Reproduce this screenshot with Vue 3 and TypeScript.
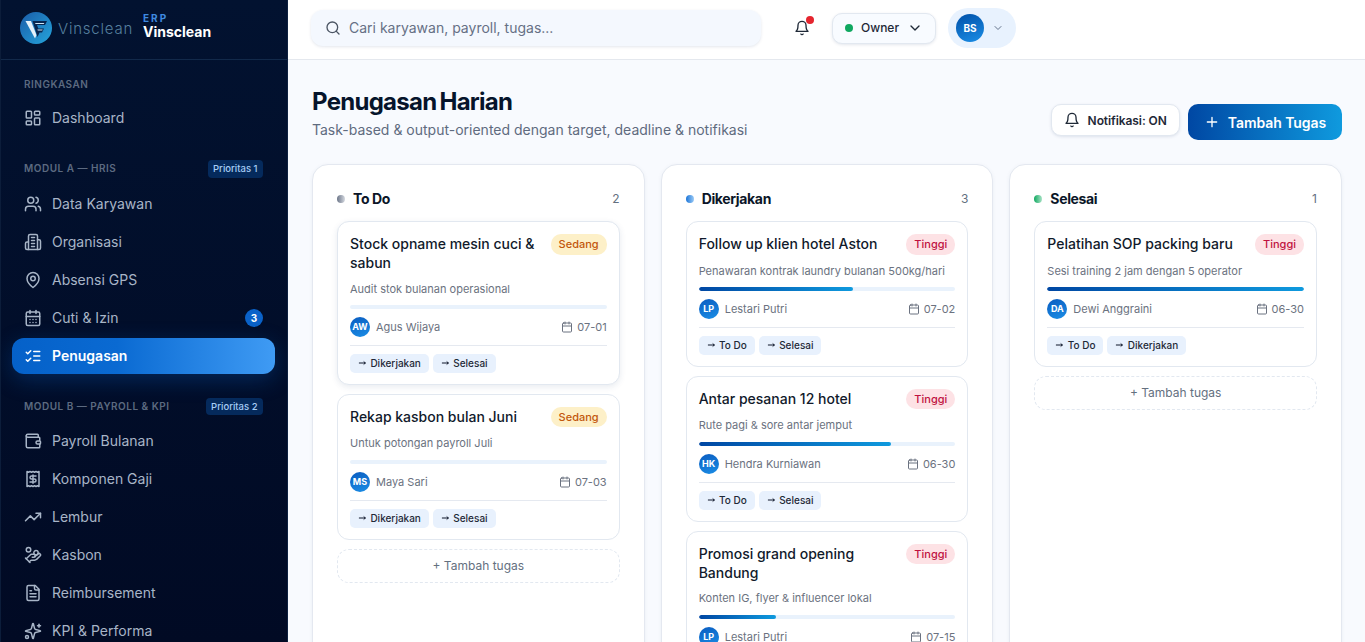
<template>
  <div class="app">
    <aside class="sidebar">
      <div class="brand">
        <svg class="logo" viewBox="0 0 32 32" width="32" height="32">
          <defs>
            <linearGradient id="logoFill" x1="0" y1="0" x2="1" y2="1">
              <stop offset="0" stop-color="#1a5ca8" />
              <stop offset="1" stop-color="#25a5dc" />
            </linearGradient>
          </defs>
          <circle cx="16" cy="16" r="16" fill="url(#logoFill)" />
          <path d="M5.5 9h5.5l5.5 14-1.5 3.5z" fill="#e4f1fa" />
          <path d="M12.5 9H27l-2 4h-8l1.3 3.5H24l-2 4h-2.4L17.5 25z" fill="#08264f" />
          <path d="M15 11h9.4l-.6 1H15.6zM17.4 17.5h5.3l-.5 1h-4.4z" fill="#cfe6f5" />
        </svg>
        <span class="logoWord">Vinsclean</span>
        <div class="brandText">
          <span class="erp">ERP</span>
          <strong class="brandName">Vinsclean</strong>
        </div>
      </div>
      <nav class="nav">
        <section v-for="group in navGroups" :key="group.label" class="navGroup">
          <div class="groupLabel">
            <span>{{ group.label }}</span>
            <span v-if="group.pill" class="pill">{{ group.pill }}</span>
          </div>
          <div class="navList">
            <a
              v-for="item in group.items"
              :key="item.label"
              class="navItem"
              :class="{ active: item.active }"
            >
              <svg class="icon18" viewBox="0 0 24 24">
                <path v-for="d in icons[item.icon]" :key="d" :d="d" />
              </svg>
              <span class="navLabel">{{ item.label }}</span>
              <span v-if="item.count" class="navCount">{{ item.count }}</span>
            </a>
          </div>
        </section>
      </nav>
    </aside>

    <div class="main">
      <header class="topbar">
        <div class="search">
          <svg class="icon16 searchIcon" viewBox="0 0 24 24">
            <path v-for="d in icons.search" :key="d" :d="d" />
          </svg>
          <span>Cari karyawan, payroll, tugas...</span>
        </div>
        <button class="bell">
          <svg class="icon16" viewBox="0 0 24 24">
            <path v-for="d in icons.bell" :key="d" :d="d" />
          </svg>
          <i class="bellDot"></i>
        </button>
        <button class="role">
          <i class="roleDot"></i>
          <span>Owner</span>
          <svg class="icon16" viewBox="0 0 24 24"><path d="m6 9 6 6 6-6" /></svg>
        </button>
        <button class="profile">
          <span class="profileAvatar">BS</span>
          <svg class="icon12" viewBox="0 0 24 24"><path d="m6 9 6 6 6-6" /></svg>
        </button>
      </header>

      <main class="page">
        <div class="pageHead">
          <div>
            <h1>Penugasan Harian</h1>
            <p>Task-based &amp; output-oriented dengan target, deadline &amp; notifikasi</p>
          </div>
          <div class="pageActions">
            <button class="notifBtn">
              <svg class="icon16" viewBox="0 0 24 24">
                <path v-for="d in icons.bell" :key="d" :d="d" />
              </svg>
              Notifikasi: ON
            </button>
            <button class="addBtn">
              <svg class="icon16" viewBox="0 0 24 24"><path d="M5 12h14M12 5v14" /></svg>
              Tambah Tugas
            </button>
          </div>
        </div>

        <div class="board">
          <section v-for="col in columns" :key="col.title" class="column">
            <div class="colHead">
              <i class="colDot" :class="col.dot"></i>
              <h2>{{ col.title }}</h2>
              <span class="colCount">{{ col.tasks.length }}</span>
            </div>
            <div class="cards">
              <article
                v-for="task in col.tasks"
                :key="task.title"
                class="card"
                :class="{ raised: task.raised }"
              >
                <div class="cardTop">
                  <h3>{{ task.title }}</h3>
                  <span class="level" :class="task.level === 'Tinggi' ? 'high' : 'mid'">{{ task.level }}</span>
                </div>
                <p class="desc">{{ task.desc }}</p>
                <div class="track">
                  <div class="fill" :style="{ width: task.progress + '%' }"></div>
                </div>
                <div class="meta">
                  <span class="avatar">{{ initials(task.owner) }}</span>
                  <span class="owner">{{ task.owner }}</span>
                  <svg class="icon12 calendar" viewBox="0 0 24 24">
                    <path v-for="d in icons.calendar" :key="d" :d="d" />
                  </svg>
                  <span class="date">{{ task.date }}</span>
                </div>
                <div class="moves">
                  <button v-for="target in col.moves" :key="target" class="move">
                    <svg class="arrow" viewBox="0 0 8 6"><path d="M1.3 3h6M6 1.8 7.3 3 6 4.2" /></svg>
                    {{ target }}
                  </button>
                </div>
              </article>
              <button class="addTask">+ Tambah tugas</button>
            </div>
          </section>
        </div>
      </main>
    </div>
  </div>
</template>

<script setup lang="ts">
interface NavItem {
  label: string;
  icon: string;
  active?: boolean;
  count?: number;
}
interface NavGroup {
  label: string;
  pill?: string;
  items: NavItem[];
}
interface Task {
  title: string;
  level: "Tinggi" | "Sedang";
  desc: string;
  progress: number;
  owner: string;
  date: string;
  raised?: boolean;
}

const icons: Record<string, string[]> = {
  dashboard: [
    "M4 3h5a1 1 0 0 1 1 1v7a1 1 0 0 1-1 1H4a1 1 0 0 1-1-1V4a1 1 0 0 1 1-1Z",
    "M15 3h5a1 1 0 0 1 1 1v3a1 1 0 0 1-1 1h-5a1 1 0 0 1-1-1V4a1 1 0 0 1 1-1Z",
    "M15 12h5a1 1 0 0 1 1 1v7a1 1 0 0 1-1 1h-5a1 1 0 0 1-1-1v-7a1 1 0 0 1 1-1Z",
    "M4 16h5a1 1 0 0 1 1 1v3a1 1 0 0 1-1 1H4a1 1 0 0 1-1-1v-3a1 1 0 0 1 1-1Z",
  ],
  users: [
    "M16 21v-2a4 4 0 0 0-4-4H6a4 4 0 0 0-4 4v2",
    "M5 7a4 4 0 1 0 8 0a4 4 0 1 0-8 0",
    "M22 21v-2a4 4 0 0 0-3-3.87",
    "M16 3.13a4 4 0 0 1 0 7.75",
  ],
  building: [
    "M6 22V4a2 2 0 0 1 2-2h8a2 2 0 0 1 2 2v18Z",
    "M6 12H4a2 2 0 0 0-2 2v6a2 2 0 0 0 2 2h2",
    "M18 9h2a2 2 0 0 1 2 2v9a2 2 0 0 1-2 2h-2",
    "M10 6h4",
    "M10 10h4",
    "M10 14h4",
    "M10 18h4",
  ],
  pin: [
    "M20 10c0 6-8 12-8 12s-8-6-8-12a8 8 0 0 1 16 0Z",
    "M9 10a3 3 0 1 0 6 0a3 3 0 1 0-6 0",
  ],
  calendarDays: [
    "M5 4h14a2 2 0 0 1 2 2v14a2 2 0 0 1-2 2H5a2 2 0 0 1-2-2V6a2 2 0 0 1 2-2Z",
    "M16 2v4",
    "M8 2v4",
    "M3 10h18",
    "M8 14h.01",
    "M12 14h.01",
    "M16 14h.01",
    "M8 18h.01",
    "M12 18h.01",
    "M16 18h.01",
  ],
  listChecks: ["m3 17 2 2 4-4", "m3 7 2 2 4-4", "M13 6h8", "M13 12h8", "M13 18h8"],
  wallet: [
    "M19 7V4a1 1 0 0 0-1-1H5a2 2 0 0 0 0 4h15a1 1 0 0 1 1 1v4h-3a2 2 0 0 0 0 4h3a1 1 0 0 0 1-1v-2a1 1 0 0 0-1-1",
    "M3 5v14a2 2 0 0 0 2 2h15a1 1 0 0 0 1-1v-4",
  ],
  receipt: [
    "M4 2v20l2-1 2 1 2-1 2 1 2-1 2 1 2-1 2 1V2l-2 1-2-1-2 1-2-1-2 1-2-1-2 1Z",
    "M16 8h-6a2 2 0 1 0 0 4h4a2 2 0 1 1 0 4H8",
    "M12 17.5v-11",
  ],
  trending: ["M22 7 13.5 15.5 8.5 10.5 2 17", "M16 7h6v6"],
  handCoins: [
    "M11 15h2a2 2 0 1 0 0-4h-3c-.6 0-1.1.2-1.4.6L3 17",
    "m7 21 1.6-1.4c.3-.4.8-.6 1.4-.6h4c1.1 0 2.1-.4 2.8-1.2l4.6-4.4a2 2 0 0 0-2.75-2.91l-4.2 3.9",
    "m2 16 6 6",
    "M13.1 9a2.9 2.9 0 1 0 5.8 0a2.9 2.9 0 1 0-5.8 0",
    "M3 5a3 3 0 1 0 6 0a3 3 0 1 0-6 0",
  ],
  file: [
    "M15 2H6a2 2 0 0 0-2 2v16a2 2 0 0 0 2 2h12a2 2 0 0 0 2-2V7Z",
    "M14 2v4a2 2 0 0 0 2 2h4",
    "M10 9H8",
    "M16 13H8",
    "M16 17H8",
  ],
  sparkle: [
    "M9.937 15.5A2 2 0 0 0 8.5 14.063l-6.135-1.582a.5.5 0 0 1 0-.962L8.5 9.936A2 2 0 0 0 9.937 8.5l1.582-6.135a.5.5 0 0 1 .963 0L14.063 8.5A2 2 0 0 0 15.5 9.937l6.135 1.581a.5.5 0 0 1 0 .964L15.5 14.063a2 2 0 0 0-1.437 1.437l-1.582 6.135a.5.5 0 0 1-.963 0z",
    "M20 3v4",
    "M22 5h-4",
    "M2 20a2 2 0 1 0 4 0a2 2 0 1 0-4 0",
  ],
  search: ["M3 11a8 8 0 1 0 16 0a8 8 0 1 0-16 0", "m21 21-4.3-4.3"],
  bell: [
    "M10.3 21a1.94 1.94 0 0 0 3.4 0",
    "M6 8a6 6 0 0 1 12 0c0 7 3 9 3 9H3s3-2 3-9",
  ],
  calendar: [
    "M5 4h14a2 2 0 0 1 2 2v14a2 2 0 0 1-2 2H5a2 2 0 0 1-2-2V6a2 2 0 0 1 2-2Z",
    "M16 2v4",
    "M8 2v4",
    "M3 10h18",
  ],
};

const navGroups: NavGroup[] = [
  {
    label: "RINGKASAN",
    items: [{ label: "Dashboard", icon: "dashboard" }],
  },
  {
    label: "MODUL A — HRIS",
    pill: "Prioritas 1",
    items: [
      { label: "Data Karyawan", icon: "users" },
      { label: "Organisasi", icon: "building" },
      { label: "Absensi GPS", icon: "pin" },
      { label: "Cuti & Izin", icon: "calendarDays", count: 3 },
      { label: "Penugasan", icon: "listChecks", active: true },
    ],
  },
  {
    label: "MODUL B — PAYROLL & KPI",
    pill: "Prioritas 2",
    items: [
      { label: "Payroll Bulanan", icon: "wallet" },
      { label: "Komponen Gaji", icon: "receipt" },
      { label: "Lembur", icon: "trending" },
      { label: "Kasbon", icon: "handCoins" },
      { label: "Reimbursement", icon: "file" },
      { label: "KPI & Performa", icon: "sparkle" },
    ],
  },
];

const columns: { title: string; dot: string; moves: string[]; tasks: Task[] }[] = [
  {
    title: "To Do",
    dot: "gray",
    moves: ["Dikerjakan", "Selesai"],
    tasks: [
      {
        title: "Stock opname mesin cuci & sabun",
        level: "Sedang",
        desc: "Audit stok bulanan operasional",
        progress: 0,
        owner: "Agus Wijaya",
        date: "07-01",
        raised: true,
      },
      {
        title: "Rekap kasbon bulan Juni",
        level: "Sedang",
        desc: "Untuk potongan payroll Juli",
        progress: 0,
        owner: "Maya Sari",
        date: "07-03",
      },
    ],
  },
  {
    title: "Dikerjakan",
    dot: "blue",
    moves: ["To Do", "Selesai"],
    tasks: [
      {
        title: "Follow up klien hotel Aston",
        level: "Tinggi",
        desc: "Penawaran kontrak laundry bulanan 500kg/hari",
        progress: 60,
        owner: "Lestari Putri",
        date: "07-02",
      },
      {
        title: "Antar pesanan 12 hotel",
        level: "Tinggi",
        desc: "Rute pagi & sore antar jemput",
        progress: 75,
        owner: "Hendra Kurniawan",
        date: "06-30",
      },
      {
        title: "Promosi grand opening Bandung",
        level: "Tinggi",
        desc: "Konten IG, flyer & influencer lokal",
        progress: 30,
        owner: "Lestari Putri",
        date: "07-15",
      },
    ],
  },
  {
    title: "Selesai",
    dot: "green",
    moves: ["To Do", "Dikerjakan"],
    tasks: [
      {
        title: "Pelatihan SOP packing baru",
        level: "Tinggi",
        desc: "Sesi training 2 jam dengan 5 operator",
        progress: 100,
        owner: "Dewi Anggraini",
        date: "06-30",
      },
    ],
  },
];

const initials = (name: string) =>
  name
    .split(" ")
    .map((part) => part[0])
    .join("")
    .slice(0, 2);
</script>

<style>
html,
body {
  margin: 0;
  background: #f8fafe;
}
</style>

<style scoped>
* {
  box-sizing: border-box;
}
button {
  font-family: inherit;
  border: 0;
  background: none;
  padding: 0;
}
svg {
  fill: none;
  stroke: currentColor;
  stroke-width: 2;
  stroke-linecap: round;
  stroke-linejoin: round;
  flex: none;
}
.icon18 {
  width: 18px;
  height: 18px;
}
.icon16 {
  width: 16px;
  height: 16px;
}
.icon12 {
  width: 12px;
  height: 12px;
}
.app {
  display: flex;
  height: 100vh;
  overflow: hidden;
  font-family: Inter, "Liberation Sans", sans-serif;
  color: #0f172a;
}

.sidebar {
  width: 288px;
  flex: none;
  overflow: hidden;
  background: linear-gradient(180deg, #021230 0%, #010a24 100%);
  border-right: 1px solid #0e2140;
  border-left: 1px solid #0c1d3a;
}
.brand {
  height: 60px;
  display: flex;
  align-items: flex-start;
  padding: 12px 0 0 19px;
  border-bottom: 1px solid #12294a;
}
.logo,
.logo path,
.logo circle {
  stroke: none;
}
.logoWord {
  margin-left: 6px;
  width: 85px;
  font-size: 15px;
  line-height: 33px;
  font-weight: 300;
  letter-spacing: 0.8px;
  color: #56809f;
}
.brandText {
  display: flex;
  flex-direction: column;
}
.erp {
  font-size: 10px;
  line-height: 12px;
  font-weight: 700;
  letter-spacing: 2px;
  color: #3f8ae0;
}
.brandName {
  font-size: 14px;
  line-height: 16px;
  font-weight: 700;
  color: #fff;
}
.nav {
  padding: 16px 12px 0 11px;
}
.navGroup + .navGroup {
  margin-top: 24px;
}
.groupLabel {
  display: flex;
  align-items: flex-start;
  justify-content: space-between;
  min-height: 16px;
  margin-bottom: 8px;
  padding: 0 12px;
  font-size: 10px;
  line-height: 16px;
  font-weight: 600;
  letter-spacing: 0.5px;
  color: #5c6a80;
}
.pill {
  height: 17.5px;
  line-height: 17.5px;
  padding: 0 5.5px;
  border-radius: 4px;
  background: #052a5c;
  color: #a6cdf6;
  font-size: 9.5px;
  font-weight: 500;
  letter-spacing: 0;
}
.navList {
  display: flex;
  flex-direction: column;
  gap: 2px;
}
.navItem {
  height: 36px;
  display: flex;
  align-items: center;
  gap: 10px;
  padding: 0 12px;
  border-radius: 12px;
  font-size: 14px;
  line-height: 20px;
  color: #a8b5c7;
}
.navLabel {
  flex: 1;
}
.navItem.active {
  background: linear-gradient(90deg, #0561c9 0%, #0a6ad2 40%, #3f9bf4 100%);
  box-shadow: 0 6px 22px rgba(10, 98, 201, 0.3);
  color: #fff;
  font-weight: 600;
}
.navCount {
  width: 18px;
  height: 18px;
  border-radius: 50%;
  background: #0a62c9;
  color: #fff;
  font-size: 10px;
  font-weight: 700;
  text-align: center;
  line-height: 18px;
}

.main {
  flex: 1;
  min-width: 0;
  display: flex;
  flex-direction: column;
}
.topbar {
  height: 60px;
  flex: none;
  display: flex;
  align-items: center;
  padding: 0 0 3px 23px;
  background: #fff;
  border-bottom: 1px solid #e4e8ee;
}
.search {
  width: 450px;
  height: 36px;
  display: flex;
  align-items: center;
  gap: 8px;
  padding: 0 14px;
  border-radius: 12px;
  background: #f4f8fe;
  box-shadow: 0 1px 3px rgba(30, 60, 110, 0.12);
  font-size: 14px;
  line-height: 20px;
  color: #667085;
}
.searchIcon {
  color: #4b5563;
}
.bell {
  position: relative;
  margin-left: 33px;
  width: 16px;
  height: 16px;
  color: #1f2937;
}
.bellDot {
  position: absolute;
  top: -4px;
  right: -4px;
  width: 8px;
  height: 8px;
  border-radius: 50%;
  background: #e5252e;
}
.role {
  margin-left: 22px;
  width: 104px;
  height: 31px;
  display: flex;
  align-items: center;
  padding: 0 12px 1px;
  border: 1px solid #e2e8f0;
  border-radius: 10px;
  background: #f8fbff;
  box-shadow: 0 1px 3px rgba(30, 60, 110, 0.12);
  font-size: 12px;
  line-height: 16px;
  font-weight: 500;
  color: #1f2937;
}
.roleDot {
  width: 8px;
  height: 8px;
  border-radius: 50%;
  background: #10a860;
  margin-right: 8px;
}
.role svg {
  margin-left: auto;
}
.profile {
  margin-left: 12px;
  width: 68px;
  height: 40px;
  display: flex;
  align-items: center;
  gap: 8px;
  padding-left: 8px;
  border-radius: 20px;
  background: #e8f2fe;
  color: #64748b;
}
.profileAvatar {
  width: 28px;
  height: 28px;
  border-radius: 50%;
  background: linear-gradient(160deg, #0050a8, #1b8ee6);
  color: #fff;
  font-size: 10px;
  font-weight: 700;
  line-height: 28px;
  text-align: center;
}

.page {
  flex: 1;
  min-height: 0;
  padding: 24px 23px 0 24px;
  background: #f8fafe;
}
.pageHead {
  display: flex;
  align-items: flex-end;
  justify-content: space-between;
  margin-bottom: 24px;
}
h1 {
  margin: 0;
  font-size: 24px;
  line-height: 36px;
  font-weight: 700;
  letter-spacing: -0.72px;
  word-spacing: -2px;
  color: #06142b;
}
.pageHead p {
  margin: 0;
  font-size: 14px;
  line-height: 20px;
  color: #5f6b7f;
}
.pageActions {
  display: flex;
  align-items: flex-start;
  gap: 8px;
}
.notifBtn {
  height: 32px;
  display: flex;
  align-items: center;
  gap: 8px;
  padding: 0 12px;
  border: 1px solid #e2e8f0;
  border-radius: 10px;
  background: #fff;
  box-shadow: 0 1px 3px rgba(30, 60, 110, 0.12);
  font-size: 12px;
  font-weight: 600;
  letter-spacing: -0.08px;
  color: #1f2937;
}
.addBtn {
  height: 36px;
  display: flex;
  align-items: center;
  gap: 8px;
  padding: 0 16px;
  border-radius: 10px;
  background: linear-gradient(90deg, #0047a3, #0f9ade);
  font-size: 14px;
  font-weight: 600;
  letter-spacing: -0.08px;
  color: #fff;
}

.board {
  display: grid;
  grid-template-columns: repeat(3, minmax(0, 1fr));
  gap: 16px;
  align-items: stretch;
}
.column {
  min-height: 560px;
  padding: 24px;
  background: #fff;
  border: 1px solid #e4e8f0;
  border-radius: 16px;
  box-shadow: 0 1px 4px rgba(30, 60, 110, 0.06);
}
.colHead {
  height: 20px;
  display: flex;
  align-items: center;
  padding-bottom: 1px;
  margin-bottom: 12px;
}
.colDot {
  width: 8px;
  height: 8px;
  border-radius: 50%;
  margin: 1px 8px 0 0;
}
.colDot.gray {
  background: linear-gradient(90deg, #6b7588, #d5d9e0);
}
.colDot.blue {
  background: linear-gradient(90deg, #1a74d8, #9ccbf6);
}
.colDot.green {
  background: linear-gradient(90deg, #10a860, #a9e3c6);
}
h2 {
  margin: 0;
  font-size: 14px;
  font-weight: 700;
  letter-spacing: -0.35px;
  color: #0b1628;
}
.colCount {
  margin-left: auto;
  font-size: 12px;
  color: #64707f;
}
.cards {
  display: flex;
  flex-direction: column;
  gap: 8.75px;
}
.card {
  padding: 12px 12px 11px;
  background: #fff;
  border: 1px solid #e2e8f0;
  border-radius: 12px;
}
.card.raised {
  box-shadow: 0 2px 6px rgba(30, 60, 110, 0.1);
}
.cardTop {
  display: flex;
  align-items: flex-start;
  justify-content: space-between;
  gap: 8px;
  margin-bottom: 8px;
}
h3 {
  margin: 0;
  font-size: 14px;
  line-height: 19.25px;
  font-weight: 500;
  color: #111a2b;
}
.level {
  flex: none;
  height: 20.5px;
  line-height: 20.5px;
  padding: 0 8px;
  border-radius: 10px;
  font-size: 11px;
  font-weight: 500;
}
.level.mid {
  background: #fdf0c8;
  color: #c2570c;
}
.level.high {
  background: #fde2e5;
  color: #c0123f;
}
.desc {
  margin: 0 0 7px;
  font-size: 11px;
  line-height: 17.5px;
  color: #6b7280;
}
.track {
  height: 4px;
  border-radius: 2px;
  background: #e9f2fc;
  overflow: hidden;
  margin-bottom: 8px;
}
.fill {
  height: 100%;
  border-radius: 2px;
  background: linear-gradient(90deg, #0047a3, #0f9ade);
}
.meta {
  display: flex;
  align-items: center;
  padding-bottom: 8px;
  border-bottom: 1px solid #e5e9f0;
  margin-bottom: 8px;
  height: 29px;
  font-size: 11px;
  color: #6b7280;
}
.avatar {
  width: 20px;
  height: 20px;
  flex: none;
  border-radius: 50%;
  background: linear-gradient(160deg, #0a5cc0, #1b8ee6);
  color: #fff;
  font-size: 9px;
  font-weight: 700;
  line-height: 20px;
  text-align: center;
  margin-right: 6px;
}
.owner {
  flex: 1;
}
.calendar {
  margin-right: 4px;
}
.moves {
  display: flex;
  gap: 4px;
}
.move {
  height: 19px;
  display: flex;
  align-items: center;
  gap: 4.4px;
  padding: 0 8px 1px;
  border-radius: 5px;
  background: #e8f1fd;
  font-size: 10px;
  font-weight: 500;
  color: #1f2937;
}
.arrow {
  width: 8px;
  height: 6px;
  stroke-width: 1;
  color: #0f172a;
}
.addTask {
  height: 34px;
  border: 1px dashed #e2e8f0;
  border-radius: 12px;
  font-size: 12px;
  color: #64707f;
}
</style>
